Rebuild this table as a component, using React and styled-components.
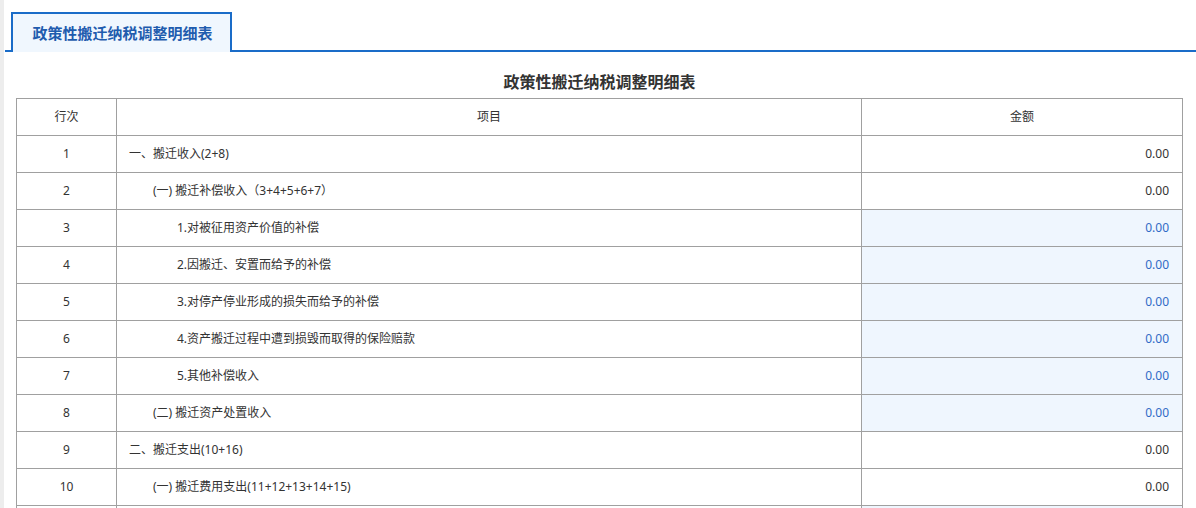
import React from "react";
import styled, { createGlobalStyle } from "styled-components";

const Global = createGlobalStyle`
  html, body { margin: 0; padding: 0; background: #fff; }
  body { font-family: "Noto Sans", "Noto Sans CJK SC", sans-serif; color: #333; }
`;

const Page = styled.div`
  display: flex;
  min-height: 508px;
`;

const SideStrip = styled.div`
  width: 4px;
  flex: 0 0 4px;
  background: #ededed;
`;

const Main = styled.div`
  flex: 1;
  min-width: 0;
`;

const TabBar = styled.div`
  display: flex;
  padding: 12px 0 0 6px;
  margin-left: 1px;
  border-bottom: 2px solid #1a6cc8;
  height: 38px;
`;

const Tab = styled.div`
  box-sizing: border-box;
  width: 221px;
  height: 40px;
  margin-bottom: -2px;
  border: 2px solid #1a6cc8;
  border-bottom: none;
  background: #f0f7fe;
  color: #1f5cae;
  font-family: "Noto Sans CJK SC", sans-serif;
  font-size: 15px;
  font-weight: 700;
  display: flex;
  align-items: center;
  justify-content: center;
  padding: 0 0 1px 2px;
`;

const Body = styled.div`
  padding: 0 13px 0 12px;
`;

const Title = styled.h2`
  margin: 0;
  padding-top: 18px;
  margin-bottom: 6px;
  height: 22px;
  line-height: 22px;
  text-align: center;
  font-family: "Noto Sans CJK SC", sans-serif;
  font-size: 16px;
  font-weight: 700;
  color: #333;
`;

const Table = styled.table`
  width: 100%;
  border-collapse: collapse;
  table-layout: fixed;
  font-size: 12px;
`;

const Th = styled.th`
  height: 34px;
  border: 1px solid #a0a0a0;
  font-weight: 400;
  color: #333;
  text-align: center;
  padding: 0 0 2px;
`;

const NumCell = styled.td`
  height: 34px;
  border: 1px solid #a0a0a0;
  text-align: center;
  color: #333;
  padding: 0 0 2px;
`;

const ItemCell = styled.td`
  height: 34px;
  border: 1px solid #a0a0a0;
  color: #333;
  padding: 0 0 2px ${(p) => 12 + p.$level * 24}px;
  white-space: nowrap;
`;

const AmountCell = styled.td`
  height: 34px;
  border: 1px solid #a0a0a0;
  text-align: right;
  padding: 0 13px 2px 0;
  color: ${(p) => (p.$editable ? "#2f6bc6" : "#333")};
  background: ${(p) => (p.$editable ? "#eff6fe" : "#fff")};
`;

const rows = [
  { n: 1, label: "一、搬迁收入(2+8)", level: 0, edit: false },
  { n: 2, label: "(一) 搬迁补偿收入（3+4+5+6+7）", level: 1, edit: false },
  { n: 3, label: "1.对被征用资产价值的补偿", level: 2, edit: true },
  { n: 4, label: "2.因搬迁、安置而给予的补偿", level: 2, edit: true },
  { n: 5, label: "3.对停产停业形成的损失而给予的补偿", level: 2, edit: true },
  { n: 6, label: "4.资产搬迁过程中遭到损毁而取得的保险赔款", level: 2, edit: true },
  { n: 7, label: "5.其他补偿收入", level: 2, edit: true },
  { n: 8, label: "(二) 搬迁资产处置收入", level: 1, edit: true },
  { n: 9, label: "二、搬迁支出(10+16)", level: 0, edit: false },
  { n: 10, label: "(一) 搬迁费用支出(11+12+13+14+15)", level: 1, edit: false },
  { n: 11, label: "1.安置职工实际发生的费用", level: 2, edit: true },
];

export default function App() {
  return (
    <>
      <Global />
      <Page>
        <SideStrip />
        <Main>
          <TabBar>
            <Tab>政策性搬迁纳税调整明细表</Tab>
          </TabBar>
          <Body>
            <Title>政策性搬迁纳税调整明细表</Title>
            <Table>
              <colgroup>
                <col style={{ width: "100px" }} />
                <col style={{ width: "745px" }} />
                <col />
              </colgroup>
              <thead>
                <tr>
                  <Th>行次</Th>
                  <Th>项目</Th>
                  <Th>金额</Th>
                </tr>
              </thead>
              <tbody>
                {rows.map((r) => (
                  <tr key={r.n}>
                    <NumCell>{r.n}</NumCell>
                    <ItemCell $level={r.level}>{r.label}</ItemCell>
                    <AmountCell $editable={r.edit}>0.00</AmountCell>
                  </tr>
                ))}
              </tbody>
            </Table>
          </Body>
        </Main>
      </Page>
    </>
  );
}
